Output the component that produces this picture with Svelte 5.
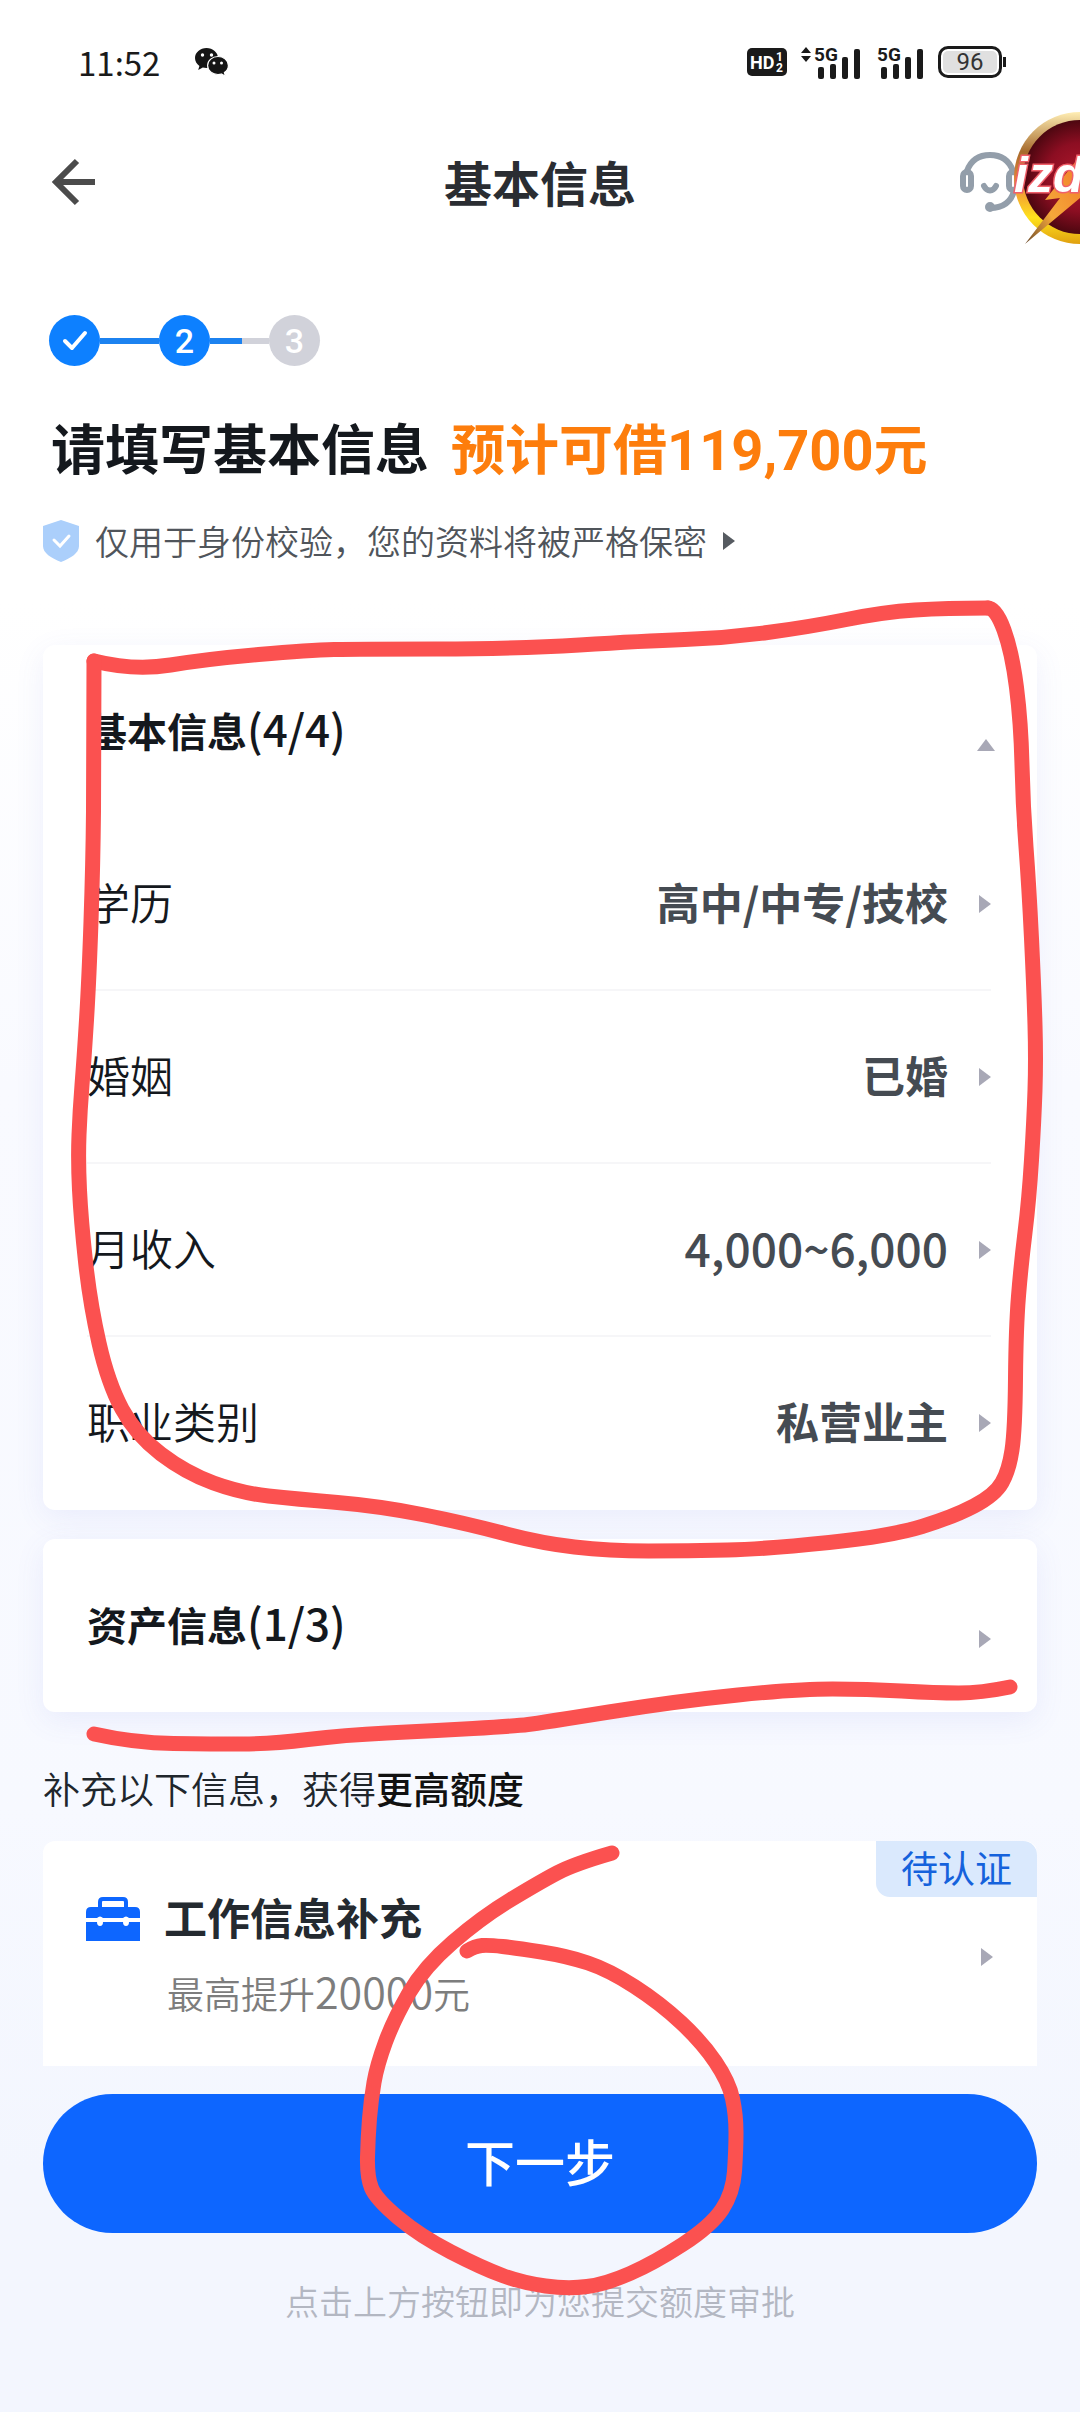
<script>
  const rows = [
    { label: '学历', value: '高中/中专/技校' },
    { label: '婚姻', value: '已婚' },
    { label: '月收入', value: '4,000~6,000', numeric: true },
    { label: '职业类别', value: '私营业主' },
  ];

  // Freehand marker strokes, as lists of points on a 1080 x 2412 canvas.
  const strokes = [
    [[94,661],[134,671],[207,659],[310,650],[358,649],[516,649],[643,641],[726,638],[809,627],[884,612],[946,608],[988,608]],
    [[988,608],[996,608],[1012,652],[1021,723],[1023,807],[1029,887],[1034,990],[1036,1060],[1034,1120],[1029,1200],[1021,1265],[1016,1327],[1015,1430],[1009,1470],[995,1495],[953,1517],[891,1536],[767,1549],[688,1551],[609,1551],[540,1543],[465,1523],[379,1506],[296,1499],[241,1493],[186,1473],[136,1435],[108,1383],[90,1303],[81,1220],[78,1160],[80,1110],[84,1060],[89,980],[93,863],[94,760],[94,661]],
    [[94,1734],[134,1743],[213,1744],[272,1744],[344,1735],[430,1731],[516,1726],[540,1723],[678,1701],[798,1689],[867,1689],[936,1693],[981,1693],[1010,1687]],
    [[612,1853],[574,1864],[540,1882],[482,1917],[424,1967],[394,2019],[377,2065],[371,2100],[368,2137],[367,2177],[376,2199],[420,2236],[482,2268],[523,2283],[568,2289],[606,2284],[654,2263],[711,2226],[733,2193],[736,2150],[736,2115],[729,2082],[702,2042],[660,2003],[609,1970],[567,1956],[516,1948],[489,1945],[475,1946],[467,1951]],
  ];

  // Curves through the midpoints, so that the line has no kinks.
  function smooth(points) {
    const last = points.length - 1;
    let d = `M${points[0][0]} ${points[0][1]}`;
    for (let i = 1; i < last; i++) {
      const [x, y] = points[i];
      const [nx, ny] = points[i + 1];
      d += i === last - 1 ? ` Q${x} ${y} ${nx} ${ny}` : ` Q${x} ${y} ${(x + nx) / 2} ${(y + ny) / 2}`;
    }
    return d;
  }
</script>

{#snippet signal(arrows)}
  <svg class="signal" width="60" height="42" viewBox="0 -4 60 42" fill="#1a1a1a" aria-hidden="true">
    {#if arrows}
      <path d="M0 8 5 2l5 6zM0 11h10l-5 6z" />
    {/if}
    <text x="13" y="16" font-size="19" font-weight="700" font-family="Roboto, sans-serif">5G</text>
    <rect x="17" y="22" width="6" height="12" rx="2" />
    <rect x="29" y="19" width="6" height="15" rx="2" />
    <rect x="41" y="12" width="6" height="22" rx="2" />
    <rect x="53" y="4" width="6" height="30" rx="2" />
  </svg>
{/snippet}

{#snippet caret()}
  <svg class="caret" width="12" height="18" viewBox="0 0 12 18" aria-hidden="true"><path d="M0 0 12 9 0 18z" fill="currentColor" /></svg>
{/snippet}

<div class="page">
  <div class="status">
    <span class="time">11:52</span>
    <svg width="34" height="30" viewBox="0 0 34 30" aria-hidden="true">
      <path fill="#151515" d="M11.500 1C5.200 1 0 5.500 0 11c0 3.200 1.700 6 4.400 7.900L3.200 23l4.600-2.500c1.200.3 2.400.5 3.700.5 6.300 0 11.500-4.500 11.500-10S17.800 1 11.500 1z" />
      <path fill="#151515" stroke="#fff" stroke-width="1.200" d="M23 9.500c-5.700 0-10.400 4-10.400 9s4.700 9 10.400 9c1.200 0 2.300-.2 3.400-.5l4 2.200-1-3.600c2.500-1.700 4-4.200 4-7.100 0-5-4.700-9-10.400-9z" />
      <g fill="#fff"><circle cx="7.500" cy="8" r="1.700" /><circle cx="16.500" cy="8" r="1.700" /><circle cx="19" cy="16" r="1.500" /><circle cx="26.500" cy="16" r="1.500" /></g>
    </svg>
    <div class="indicators">
      <svg width="40" height="28" viewBox="0 0 40 28" aria-hidden="true">
        <rect width="40" height="28" rx="5" fill="#1a1a1a" />
        <g fill="#fff" font-family="Roboto, sans-serif" font-weight="700">
          <text x="3" y="21" font-size="18">HD</text>
          <text x="29" y="13" font-size="12">1</text>
          <text x="29" y="24" font-size="12">2</text>
        </g>
      </svg>
      {@render signal(true)}
      {@render signal(false)}
      <span class="battery">96</span>
    </div>
  </div>

  <header>
    <button class="back" aria-label="返回">
      <svg width="46" height="48" viewBox="0 0 46 48" fill="none" stroke="#4b4b4b" stroke-width="6"><path d="M26 3 5 24l21 21M4 24h40" /></svg>
    </button>
    <h1>基本信息</h1>
    <button class="service" aria-label="客服">
      <svg width="62" height="62" viewBox="0 0 62 62" fill="none" stroke="#939eaa" stroke-width="6" stroke-linecap="round">
        <path d="M7 20C11 9 19 4 30 4s19 5 23 16M54 40c-3 11-11 17-24 17" />
        <rect x="3" y="21" width="8" height="18" rx="4" />
        <rect x="49" y="21" width="8" height="18" rx="4" />
        <path d="M24 35c3 6 9 6 12 0" />
        <circle cx="30" cy="56" r="2" />
      </svg>
    </button>
  </header>

  <main>
    <ol class="steps" aria-label="进度">
      <li class="done"><svg width="26" height="22" viewBox="0 0 26 22" fill="none" stroke="#fff" stroke-width="4" stroke-linecap="round" stroke-linejoin="round"><path d="m3 11 7 7L23 3" /></svg></li>
      <li class="line" aria-hidden="true"></li>
      <li class="done">2</li>
      <li class="line half" aria-hidden="true"></li>
      <li>3</li>
    </ol>

    <h2>请填写基本信息<em>预计可借<b>119,700</b>元</em></h2>

    <a class="privacy" href="#privacy">
      <svg width="36" height="42" viewBox="0 0 36 42"><path fill="#abcffb" d="M18 0 36 6v20c0 7-8 12-18 16C8 38 0 33 0 26V6z" /><path d="m11 20 6 6 9-10" fill="none" stroke="#fff" stroke-width="3" stroke-linecap="round" /></svg>
      <span>仅用于身份校验，您的资料将被严格保密</span>
      {@render caret()}
    </a>

    <section class="card">
      <button class="head" aria-expanded="true">
        <span>基本信息<b>(4/4)</b></span>
        <span class="caret low"><svg width="18" height="12" viewBox="0 0 18 12" aria-hidden="true"><path d="M9 0 18 12H0z" fill="currentColor" /></svg></span>
      </button>
      {#each rows as row}
        <button class="row">
          <span class="label">{row.label}</span>
          <span class="value" class:numeric={row.numeric}>{row.value}</span>
          {@render caret()}
        </button>
      {/each}
    </section>

    <section class="card assets">
      <button class="head" aria-expanded="false">
        <span>资产信息<b>(1/3)</b></span>
        <span class="caret low">{@render caret()}</span>
      </button>
    </section>

    <p class="more">补充以下信息，获得<strong>更高额度</strong></p>

    <button class="extra">
      <svg class="case" width="54" height="44" viewBox="0 0 54 44" aria-hidden="true">
        <path fill="none" stroke="#0d66ff" stroke-width="4" d="M14 12V5q0-3 3-3h20q3 0 3 3v7" />
        <path fill="#0d66ff" d="M5 10h44q5 0 5 5v6H43q-3-3-6 0H17q-3-3-6 0H0v-6q0-5 5-5zM0 25h11q0 4 3 4t3-4h20q0 4 3 4t3-4h11v19H0z" />
      </svg>
      <span class="details">
        <span class="title">工作信息补充</span>
        <span class="sub">最高提升<b>20000</b>元</span>
      </span>
      {@render caret()}
      <span class="tag">待认证</span>
    </button>

    <button class="next">下一步</button>
    <p class="hint">点击上方按钮即为您提交额度审批</p>
  </main>

  <svg class="bubble" width="70" height="140" viewBox="0 0 70 140" role="img" aria-label="izd">
    <defs>
      <linearGradient id="ring" x1="0" y1="0" x2="0" y2="1"><stop offset="0" stop-color="#ffeeb4" /><stop offset=".3" stop-color="#a66a2c" /><stop offset=".55" stop-color="#f08a3c" /><stop offset=".8" stop-color="#ffe21c" /><stop offset="1" stop-color="#e0a010" /></linearGradient>
      <radialGradient id="disc"><stop offset="0" stop-color="#b0182c" /><stop offset=".6" stop-color="#8c0e22" /><stop offset="1" stop-color="#4c0710" /></radialGradient>
      <linearGradient id="bolt" x1="0" y1="1" x2="1" y2="0"><stop offset="0" stop-color="#6b4a2c" /><stop offset=".4" stop-color="#f5a83a" /><stop offset="1" stop-color="#f07a28" /></linearGradient>
    </defs>
    <circle cx="70" cy="70" r="66" fill="url(#ring)" />
    <circle cx="70" cy="69" r="57" fill="url(#disc)" />
    <path fill="url(#bolt)" d="M35 92 70 48v42L15 136 50 90z" />
    <text x="4" y="84" font-size="50" font-weight="700" font-style="italic" font-family="Liberation Sans, sans-serif" fill="#fff" stroke="#f0606a" stroke-width="3" paint-order="stroke">izd</text>
  </svg>

  <svg class="ink" viewBox="0 0 1080 2412" preserveAspectRatio="none" aria-hidden="true">
    {#each strokes as points}
      <path d={smooth(points)} />
    {/each}
  </svg>
</div>

<style>
  :global(body) {
    margin: 0;
    font-family: 'Noto Sans CJK SC', sans-serif;
    color: #14181d;
  }
  .page {
    position: relative;
    overflow: hidden;
    min-height: 100vh;
    background: linear-gradient(#fff 0, #fff 25%, #f9faff 45%, #f7f9ff 75%, #f3f6fe 90%);
  }
  button {
    border: 0;
    padding: 0;
    background: none;
    font: inherit;
    color: inherit;
    text-align: left;
    cursor: pointer;
  }
  svg {
    display: block;
    flex: none;
  }
  b {
    font-weight: inherit;
  }
  .status {
    display: flex;
    align-items: center;
    gap: 35px;
    height: 124px;
    padding: 0 78px;
  }
  .time {
    font-size: 33px;
    line-height: 40px;
    color: #1a1a1a;
  }
  .indicators {
    display: flex;
    align-items: center;
    gap: 14px;
    margin-left: auto;
  }
  .signal + .signal {
    margin-left: -11px;
  }
  .battery {
    position: relative;
    box-sizing: border-box;
    width: 64px;
    height: 32px;
    border: 3px solid #1a1a1a;
    border-radius: 10px;
    background: #e0e0e0;
    box-shadow: inset 0 0 0 2px #fff;
    font: 24px/26px Roboto, sans-serif;
    text-align: center;
    color: #333;
  }
  .battery::after {
    content: '';
    position: absolute;
    right: -7px;
    top: 8px;
    width: 3px;
    height: 10px;
    background: #1a1a1a;
  }
  header {
    display: grid;
    grid-template-columns: 69px 1fr 69px;
    align-items: center;
    height: 116px;
    padding: 0 51px;
  }
  h1 {
    margin: 0;
    padding-bottom: 2px;
    text-align: center;
    font-size: 48px;
    line-height: 64px;
    font-weight: 700;
    color: #2a2d32;
  }
  main {
    padding: 75px 43px 0;
  }
  .steps {
    display: flex;
    align-items: center;
    margin: 0;
    padding: 0 6px;
    list-style: none;
  }
  .steps li {
    display: grid;
    place-items: center;
    width: 51px;
    height: 51px;
    border-radius: 50%;
    background: #d1d2da;
    color: #fff;
    font-family: Roboto, sans-serif;
    font-size: 34px;
    line-height: 48px;
    font-weight: 500;
  }
  .steps .done {
    background: #0d80ff;
  }
  .steps .line {
    width: 59px;
    height: 6px;
    border-radius: 0;
    background: #1c82f0;
  }
  .steps .half {
    background: linear-gradient(90deg, #1c82f0 55%, #d1d2da 55%);
  }
  h2 {
    display: flex;
    align-items: baseline;
    gap: 22px;
    margin: 41px 0 0;
    padding: 0 8px;
    font-size: 54px;
    line-height: 80px;
    font-weight: 700;
    white-space: nowrap;
  }
  em {
    font-style: normal;
    color: #fd7d0c;
  }
  h2 b {
    font-family: Roboto, sans-serif;
    font-size: 56px;
    line-height: 1;
  }
  .privacy {
    display: flex;
    align-items: center;
    gap: 16px;
    margin-top: 32px;
    font-size: 34px;
    line-height: 44px;
    font-weight: 350;
    color: #50555b;
    text-decoration: none;
    white-space: nowrap;
  }
  .card {
    margin-top: 82px;
    border-radius: 12px;
    background: #fff;
    box-shadow: 0 8px 30px rgba(90, 100, 220, 0.09);
  }
  .assets {
    margin-top: 29px;
  }
  .head {
    display: flex;
    align-items: center;
    justify-content: space-between;
    width: 100%;
    padding: 53px 42px 58px 44px;
    font-size: 40px;
    line-height: 60px;
    font-weight: 700;
  }
  .assets .head {
    padding-right: 46px;
  }
  .head b {
    font-size: 44px;
    font-weight: 500;
  }
  .caret {
    color: #a8a8b6;
  }
  .low {
    padding-top: 32px;
  }
  .privacy :global(.caret) {
    color: #565b61;
  }
  .row {
    display: flex;
    align-items: center;
    width: calc(100% - 90px);
    margin: 0 46px 0 44px;
    height: 173px;
    border-bottom: 2px solid #f6f6f8;
    font-size: 43px;
    line-height: 60px;
  }
  .row:last-child {
    border-bottom-color: transparent;
  }
  .label,
  .value {
    padding-bottom: 5px;
  }
  .label {
    font-weight: 350;
  }
  .value {
    margin: 0 31px 0 auto;
    font-weight: 700;
    color: #454b52;
  }
  .numeric {
    font-size: 46px;
    font-weight: 500;
  }
  .more {
    margin: 50px 0 0;
    font-size: 37px;
    line-height: 52px;
    font-weight: 350;
    color: #20262c;
  }
  .more strong {
    font-weight: 500;
    color: #111;
  }
  .extra {
    position: relative;
    display: flex;
    align-items: center;
    gap: 24px;
    width: 100%;
    height: 225px;
    margin-top: 27px;
    padding: 6px 44px 0 43px;
    border-radius: 12px 12px 0 0;
    background: #fff;
  }
  .case {
    align-self: flex-start;
    margin-top: 50px;
  }
  .details {
    display: flex;
    flex: 1;
    flex-direction: column;
    gap: 14px;
    padding-bottom: 4px;
  }
  .title {
    font-size: 43px;
    line-height: 60px;
    font-weight: 700;
    color: #242a30;
  }
  .sub {
    padding-left: 3px;
    font-size: 37px;
    line-height: 60px;
    font-weight: 350;
    color: #7d7d7d;
  }
  .sub b {
    font-size: 43px;
  }
  .tag {
    position: absolute;
    top: 0;
    right: 0;
    padding: 0 25px 4px;
    border-radius: 0 14px;
    background: #dae9fd;
    font-size: 37px;
    line-height: 52px;
    color: #1562dc;
  }
  .next {
    width: 100%;
    height: 139px;
    margin-top: 28px;
    padding-bottom: 8px;
    border-radius: 70px;
    background: #0d66ff;
    color: #fff;
    font-size: 50px;
    font-weight: 500;
    text-align: center;
  }
  .hint {
    margin: 0;
    padding: 42px 0 80px;
    text-align: center;
    font-size: 34px;
    line-height: 52px;
    font-weight: 350;
    color: #b3b7c2;
  }
  .bubble {
    position: absolute;
    top: 108px;
    right: 0;
  }
  .ink {
    position: absolute;
    inset: 0;
    width: 100%;
    height: 100%;
    pointer-events: none;
    fill: none;
    stroke: #fb5150;
    stroke-width: 15px;
    stroke-linecap: round;
    stroke-linejoin: round;
  }
</style>
